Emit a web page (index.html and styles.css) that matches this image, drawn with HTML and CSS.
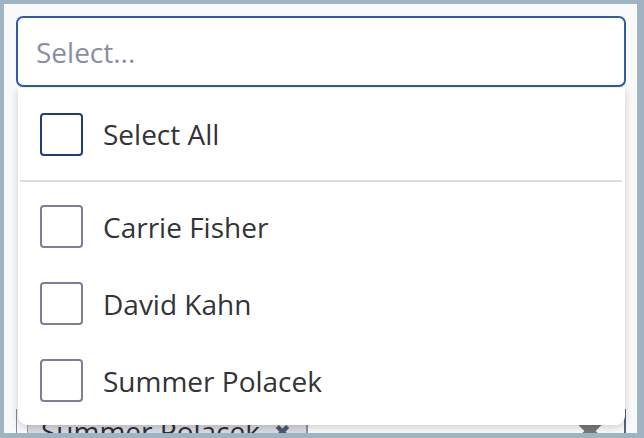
FILE: index.html
```html
<!DOCTYPE html>
<html>
<head>
<meta charset="utf-8">
<link rel="stylesheet" href="styles.css">
</head>
<body>
<div class="frame">
  <div class="input"><span class="placeholder">Select...</span></div>
  <div class="under">
    <div class="tag"><span>Summer Polacek</span><span class="tag-x">&#10006;</span></div>
    <svg class="clear" width="34" height="34" viewBox="0 0 34 34"><path d="M5 5 L29 29 M29 5 L5 29" stroke="#77777c" stroke-width="8"/></svg>
  </div>
  <div class="dropdown">
    <div class="option all"><span class="box dark"></span><span>Select All</span></div>
    <div class="divider"></div>
    <div class="list">
      <div class="option"><span class="box"></span><span>Carrie Fisher</span></div>
      <div class="option"><span class="box"></span><span>David Kahn</span></div>
      <div class="option"><span class="box"></span><span>Summer Polacek</span></div>
    </div>
  </div>
</div>
</body>
</html>
```
FILE: styles.css
```css
html, body { margin: 0; padding: 0; }
body {
  background: #9fb4c0;
  width: 644px;
  height: 438px;
  overflow: hidden;
  font-family: "Open Sans", "Noto Sans", sans-serif;
}
.frame {
  position: relative;
  margin: 4px 7px 0 4px;
  height: 429px;
  background: #f9f9fa;
  overflow: hidden;
  padding: 12px 0 0 12px;
  box-sizing: border-box;
}
.input {
  width: 610px;
  height: 71px;
  box-sizing: border-box;
  border: 2px solid #2f5ca6;
  border-radius: 7px;
  background: #fff;
  display: flex;
  align-items: center;
  padding-left: 18px;
}
.placeholder {
  color: #8a8da3;
  font-size: 28px;
}
.under {
  margin-top: 322px;
  width: 610px;
  height: 60px;
  box-sizing: border-box;
  border-left: 1.5px solid #8a8a96;
  border-right: 2px solid #5b6282;
  display: flex;
  align-items: flex-start;
  padding: 0 0 0 10px;
}
.tag {
  width: 281px;
  height: 44px;
  background: #d9dae2;
  border-left: 1px solid #9a9aa8;
  border-right: 2px solid #8e90a2;
  box-sizing: border-box;
  display: flex;
  align-items: center;
  padding-left: 13px;
  font-size: 28px;
  color: #2e2e38;
}
.tag-x { margin-left: 14px; color: #4e5470; font-size: 20px; }
.clear { margin-left: auto; margin-right: 17px; margin-top: 5px; }
.dropdown {
  position: absolute;
  left: 14px;
  top: 84px;
  width: 607px;
  height: 337px;
  background: #fff;
  border-radius: 0 0 9px 9px;
  box-shadow: 0 2px 8px rgba(0,0,0,0.18);
}
.list { padding-top: 6px; }
.option {
  display: flex;
  align-items: center;
  height: 77px;
  padding-left: 22px;
  font-size: 28px;
  color: #333338;
}
.option.all { height: 92px; }
.box {
  width: 39px;
  height: 39px;
  border: 2px solid #7b7f97;
  border-radius: 4px;
  margin-right: 20px;
  flex: none;
}
.box.dark { border-color: #1f3e75; }
.divider {
  height: 2px;
  background: #dcdcdf;
  margin: 0 3px 0 2px;
}
```
